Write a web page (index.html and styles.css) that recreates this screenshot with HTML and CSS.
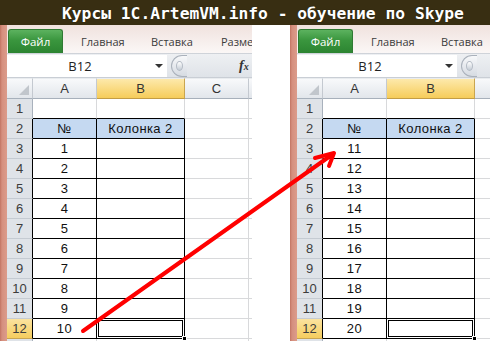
FILE: index.html
```html
<!DOCTYPE html>
<html lang="ru">
<head>
<meta charset="utf-8">
<title>Курсы 1C.ArtemVM.info</title>
<link rel="stylesheet" href="styles.css">
</head>
<body>
<div class="page">
  <header class="title">Курсы 1C.ArtemVM.info - обучение по Skype</header>
  <main class="stage">
    <div class="edge"></div>
    <section class="xl xl-left">
      <div class="ribbon">
        <div class="file-tab">Файл</div>
        <div class="tab first">Главная</div>
        <div class="tab">Вставка</div>
        <div class="tab">Разметка</div>
      </div>
      <div class="fbar">
        <div class="namebox"><span class="nb-text">B12</span><span class="nb-arrow"></span></div>
        <div class="knob"><span class="knob-dot"></span></div>
        <div class="fx">f<span class="fx-x">x</span></div>
      </div>
      <div class="grid">
        <div class="ch corner"><span class="tri"></span></div><div class="ch">A</div><div class="ch sel">B</div><div class="ch">C</div><div class="ch"></div>
        <div class="rh">1</div><div class="c top"></div><div class="c top"></div><div class="c"></div><div class="c"></div>
        <div class="rh tb">2</div><div class="c t hd">№</div><div class="c t hd">Колонка 2</div><div class="c"></div><div class="c"></div>
        <div class="rh tb">3</div><div class="c t">1</div><div class="c t"></div><div class="c"></div><div class="c"></div>
        <div class="rh tb">4</div><div class="c t">2</div><div class="c t"></div><div class="c"></div><div class="c"></div>
        <div class="rh tb">5</div><div class="c t">3</div><div class="c t"></div><div class="c"></div><div class="c"></div>
        <div class="rh tb">6</div><div class="c t">4</div><div class="c t"></div><div class="c"></div><div class="c"></div>
        <div class="rh tb">7</div><div class="c t">5</div><div class="c t"></div><div class="c"></div><div class="c"></div>
        <div class="rh tb">8</div><div class="c t">6</div><div class="c t"></div><div class="c"></div><div class="c"></div>
        <div class="rh tb">9</div><div class="c t">7</div><div class="c t"></div><div class="c"></div><div class="c"></div>
        <div class="rh tb">10</div><div class="c t">8</div><div class="c t"></div><div class="c"></div><div class="c"></div>
        <div class="rh tb">11</div><div class="c t">9</div><div class="c t"></div><div class="c"></div><div class="c"></div>
        <div class="rh tb sel">12</div><div class="c t">10</div><div class="c t active"><span class="handle"></span></div><div class="c"></div><div class="c"></div>
        <div class="rh">13</div><div class="c"></div><div class="c"></div><div class="c"></div><div class="c"></div>
      </div>
    </section>
    <div class="gap"></div>
    <div class="edge"></div>
    <section class="xl xl-right">
      <div class="ribbon">
        <div class="file-tab">Файл</div>
        <div class="tab first">Главная</div>
        <div class="tab">Вставка</div>
      </div>
      <div class="fbar">
        <div class="namebox"><span class="nb-text">B12</span><span class="nb-arrow"></span></div>
        <div class="knob"><span class="knob-dot"></span></div>
      </div>
      <div class="grid">
        <div class="ch corner"><span class="tri"></span></div><div class="ch">A</div><div class="ch sel">B</div><div class="ch">C</div><div class="ch"></div>
        <div class="rh">1</div><div class="c top"></div><div class="c top"></div><div class="c"></div><div class="c"></div>
        <div class="rh tb">2</div><div class="c t hd">№</div><div class="c t hd">Колонка 2</div><div class="c"></div><div class="c"></div>
        <div class="rh tb">3</div><div class="c t">11</div><div class="c t"></div><div class="c"></div><div class="c"></div>
        <div class="rh tb">4</div><div class="c t">12</div><div class="c t"></div><div class="c"></div><div class="c"></div>
        <div class="rh tb">5</div><div class="c t">13</div><div class="c t"></div><div class="c"></div><div class="c"></div>
        <div class="rh tb">6</div><div class="c t">14</div><div class="c t"></div><div class="c"></div><div class="c"></div>
        <div class="rh tb">7</div><div class="c t">15</div><div class="c t"></div><div class="c"></div><div class="c"></div>
        <div class="rh tb">8</div><div class="c t">16</div><div class="c t"></div><div class="c"></div><div class="c"></div>
        <div class="rh tb">9</div><div class="c t">17</div><div class="c t"></div><div class="c"></div><div class="c"></div>
        <div class="rh tb">10</div><div class="c t">18</div><div class="c t"></div><div class="c"></div><div class="c"></div>
        <div class="rh tb">11</div><div class="c t">19</div><div class="c t"></div><div class="c"></div><div class="c"></div>
        <div class="rh tb sel">12</div><div class="c t">20</div><div class="c t active"><span class="handle"></span></div><div class="c"></div><div class="c"></div>
        <div class="rh">13</div><div class="c"></div><div class="c"></div><div class="c"></div><div class="c"></div>
      </div>
    </section>
  </main>
  <svg class="arrow" width="490" height="341" viewBox="0 0 490 341" aria-hidden="true">
    <g fill="none" stroke="#f00" stroke-width="4" stroke-linecap="round" stroke-linejoin="round">
      <path d="M83 331 L333 154"/>
      <path d="M315 158 L334 153 L329 166"/>
    </g>
  </svg>
</div>
</body>
</html>
```

FILE: styles.css
```css
* { box-sizing: border-box; }
html, body { margin: 0; padding: 0; }
body {
  width: 490px;
  height: 341px;
  overflow: hidden;
  background: #fff;
  font-family: "Open Sans", "Noto Sans", sans-serif;
}
.page {
  position: relative;
  width: 490px;
  height: 341px;
  display: flex;
  flex-direction: column;
}
.title {
  height: 25px;
  flex: none;
  background: #382e12;
  color: #fff;
  font-family: "DejaVu Sans Mono", monospace;
  font-weight: bold;
  font-size: 16.3px;
  line-height: 27px;
  padding-left: 62px;
  white-space: nowrap;
  overflow: hidden;
  text-shadow: 0 0 1px rgba(0,0,0,0.6);
}
.stage {
  flex: 1;
  display: flex;
  min-height: 0;
}
.edge {
  width: 7px;
  flex: none;
  background: linear-gradient(90deg, #c27462 0, #d58f7e 2px, #dc9c8b 100%);
}
.gap {
  width: 38px;
  flex: none;
  background: #fff;
}
.xl {
  display: flex;
  flex-direction: column;
  overflow: hidden;
  background: #fff;
}
.xl-left { width: 245px; flex: none; }
.xl-right { flex: 1; min-width: 0; }

.ribbon {
  height: 28px;
  flex: none;
  display: flex;
  align-items: flex-end;
  background: linear-gradient(#f0e2de, #fbf7f6);
  font-size: 11px;
  color: #3b3b3b;
  white-space: nowrap;
}
.file-tab {
  width: 55px;
  height: 24px;
  margin-left: 1px;
  flex: none;
  border: 1px solid #2f7a33;
  border-bottom: none;
  border-radius: 3px 3px 0 0;
  background: linear-gradient(#5cb25f, #3a963e 45%, #2c8431);
  color: #fff;
  display: flex;
  align-items: center;
  justify-content: center;
  font-size: 11.5px;
}
.tab {
  width: 70px;
  flex: none;
  height: 24px;
  display: flex;
  align-items: center;
}
.tab.first { margin-left: 18px; }

.fbar {
  height: 25px;
  flex: none;
  display: flex;
  align-items: center;
  background: linear-gradient(#eef0f3, #dfe3e8);
  border-top: 1px solid #cfd3d9;
  border-bottom: 1px solid #c9ced5;
}
.namebox {
  width: 160px;
  height: 22px;
  flex: none;
  background: #fff;
  display: flex;
  align-items: center;
}
.nb-text {
  flex: 1;
  text-align: center;
  font-size: 13px;
  color: #222;
  padding-left: 2px;
}
.nb-arrow {
  width: 16px;
  height: 22px;
  display: flex;
  align-items: center;
  justify-content: center;
}
.nb-arrow::before {
  content: "";
  border-left: 4px solid transparent;
  border-right: 4px solid transparent;
  border-top: 4px solid #333;
}
.knob {
  width: 16px;
  height: 22px;
  margin-left: 4px;
  flex: none;
  border: 1px solid #aab1bb;
  border-radius: 11px 0 0 11px;
  border-right: none;
  background: linear-gradient(#f7f8fa, #d6dbe2);
  display: flex;
  align-items: center;
  justify-content: center;
}
.knob-dot {
  width: 7px;
  height: 10px;
  border-radius: 50%;
  background: linear-gradient(#ffffff, #c5ccd5);
  border: 1px solid #b4bbc5;
}
.fx {
  margin-left: 52px;
  font-family: "Liberation Serif", serif;
  font-style: italic;
  font-weight: bold;
  font-size: 14px;
  color: #333;
}
.fx-x { font-size: 10px; }

.grid {
  display: grid;
  grid-template-columns: 26px 64px 88px 64px 64px;
  grid-template-rows: 21px repeat(13, 20px);
  font-family: "Liberation Sans", Arial, sans-serif;
  font-size: 13px;
  color: #111;
}
.grid > div {
  display: flex;
  align-items: center;
  justify-content: center;
  border-right: 1px solid #d8d9db;
  border-bottom: 1px solid #d8d9db;
  white-space: nowrap;
  overflow: hidden;
}
.grid > .ch {
  background: linear-gradient(#f8f9fb, #e2e6eb);
  border-right: 1px solid #c4c9d0;
  border-bottom: 1px solid #a7b0bb;
  border-top: 1px solid #e9ecef;
  color: #333;
}
.grid > .ch.sel {
  background: linear-gradient(#fde9ab, #f6cc5a);
  border-right-color: #c9a550;
  border-bottom-color: #c39d45;
}
.grid > .corner {
  position: relative;
}
.tri {
  position: absolute;
  right: 3px;
  bottom: 3px;
  width: 0;
  height: 0;
  border-left: 10px solid transparent;
  border-bottom: 10px solid #c1c6cc;
}
.grid > .rh {
  background: #dfe3e8;
  border-right: 1px solid #a8b1bc;
  border-bottom: 1px solid #c5cbd2;
  color: #3c3c3c;
}
.grid > .rh.tb { border-right-color: #000; }
.grid > .rh.sel {
  background: linear-gradient(#fbe3a0, #f5cd5e);
  border-bottom-color: #c9a550;
}
.grid > .top { border-bottom-color: #000; }
.grid > .t {
  border-right-color: #000;
  border-bottom-color: #000;
  letter-spacing: 0.4px;
}
.grid > .hd { background: #c5d9f1; }
.grid > .active {
  position: relative;
  overflow: visible;
  box-shadow: inset 0 0 0 1px #fff, inset 0 0 0 2px #000;
}
.handle {
  position: absolute;
  right: -3px;
  bottom: -3px;
  width: 5px;
  height: 5px;
  background: #000;
  border: 1px solid #fff;
}
.arrow {
  position: absolute;
  left: 0;
  top: 0;
  pointer-events: none;
}
```
